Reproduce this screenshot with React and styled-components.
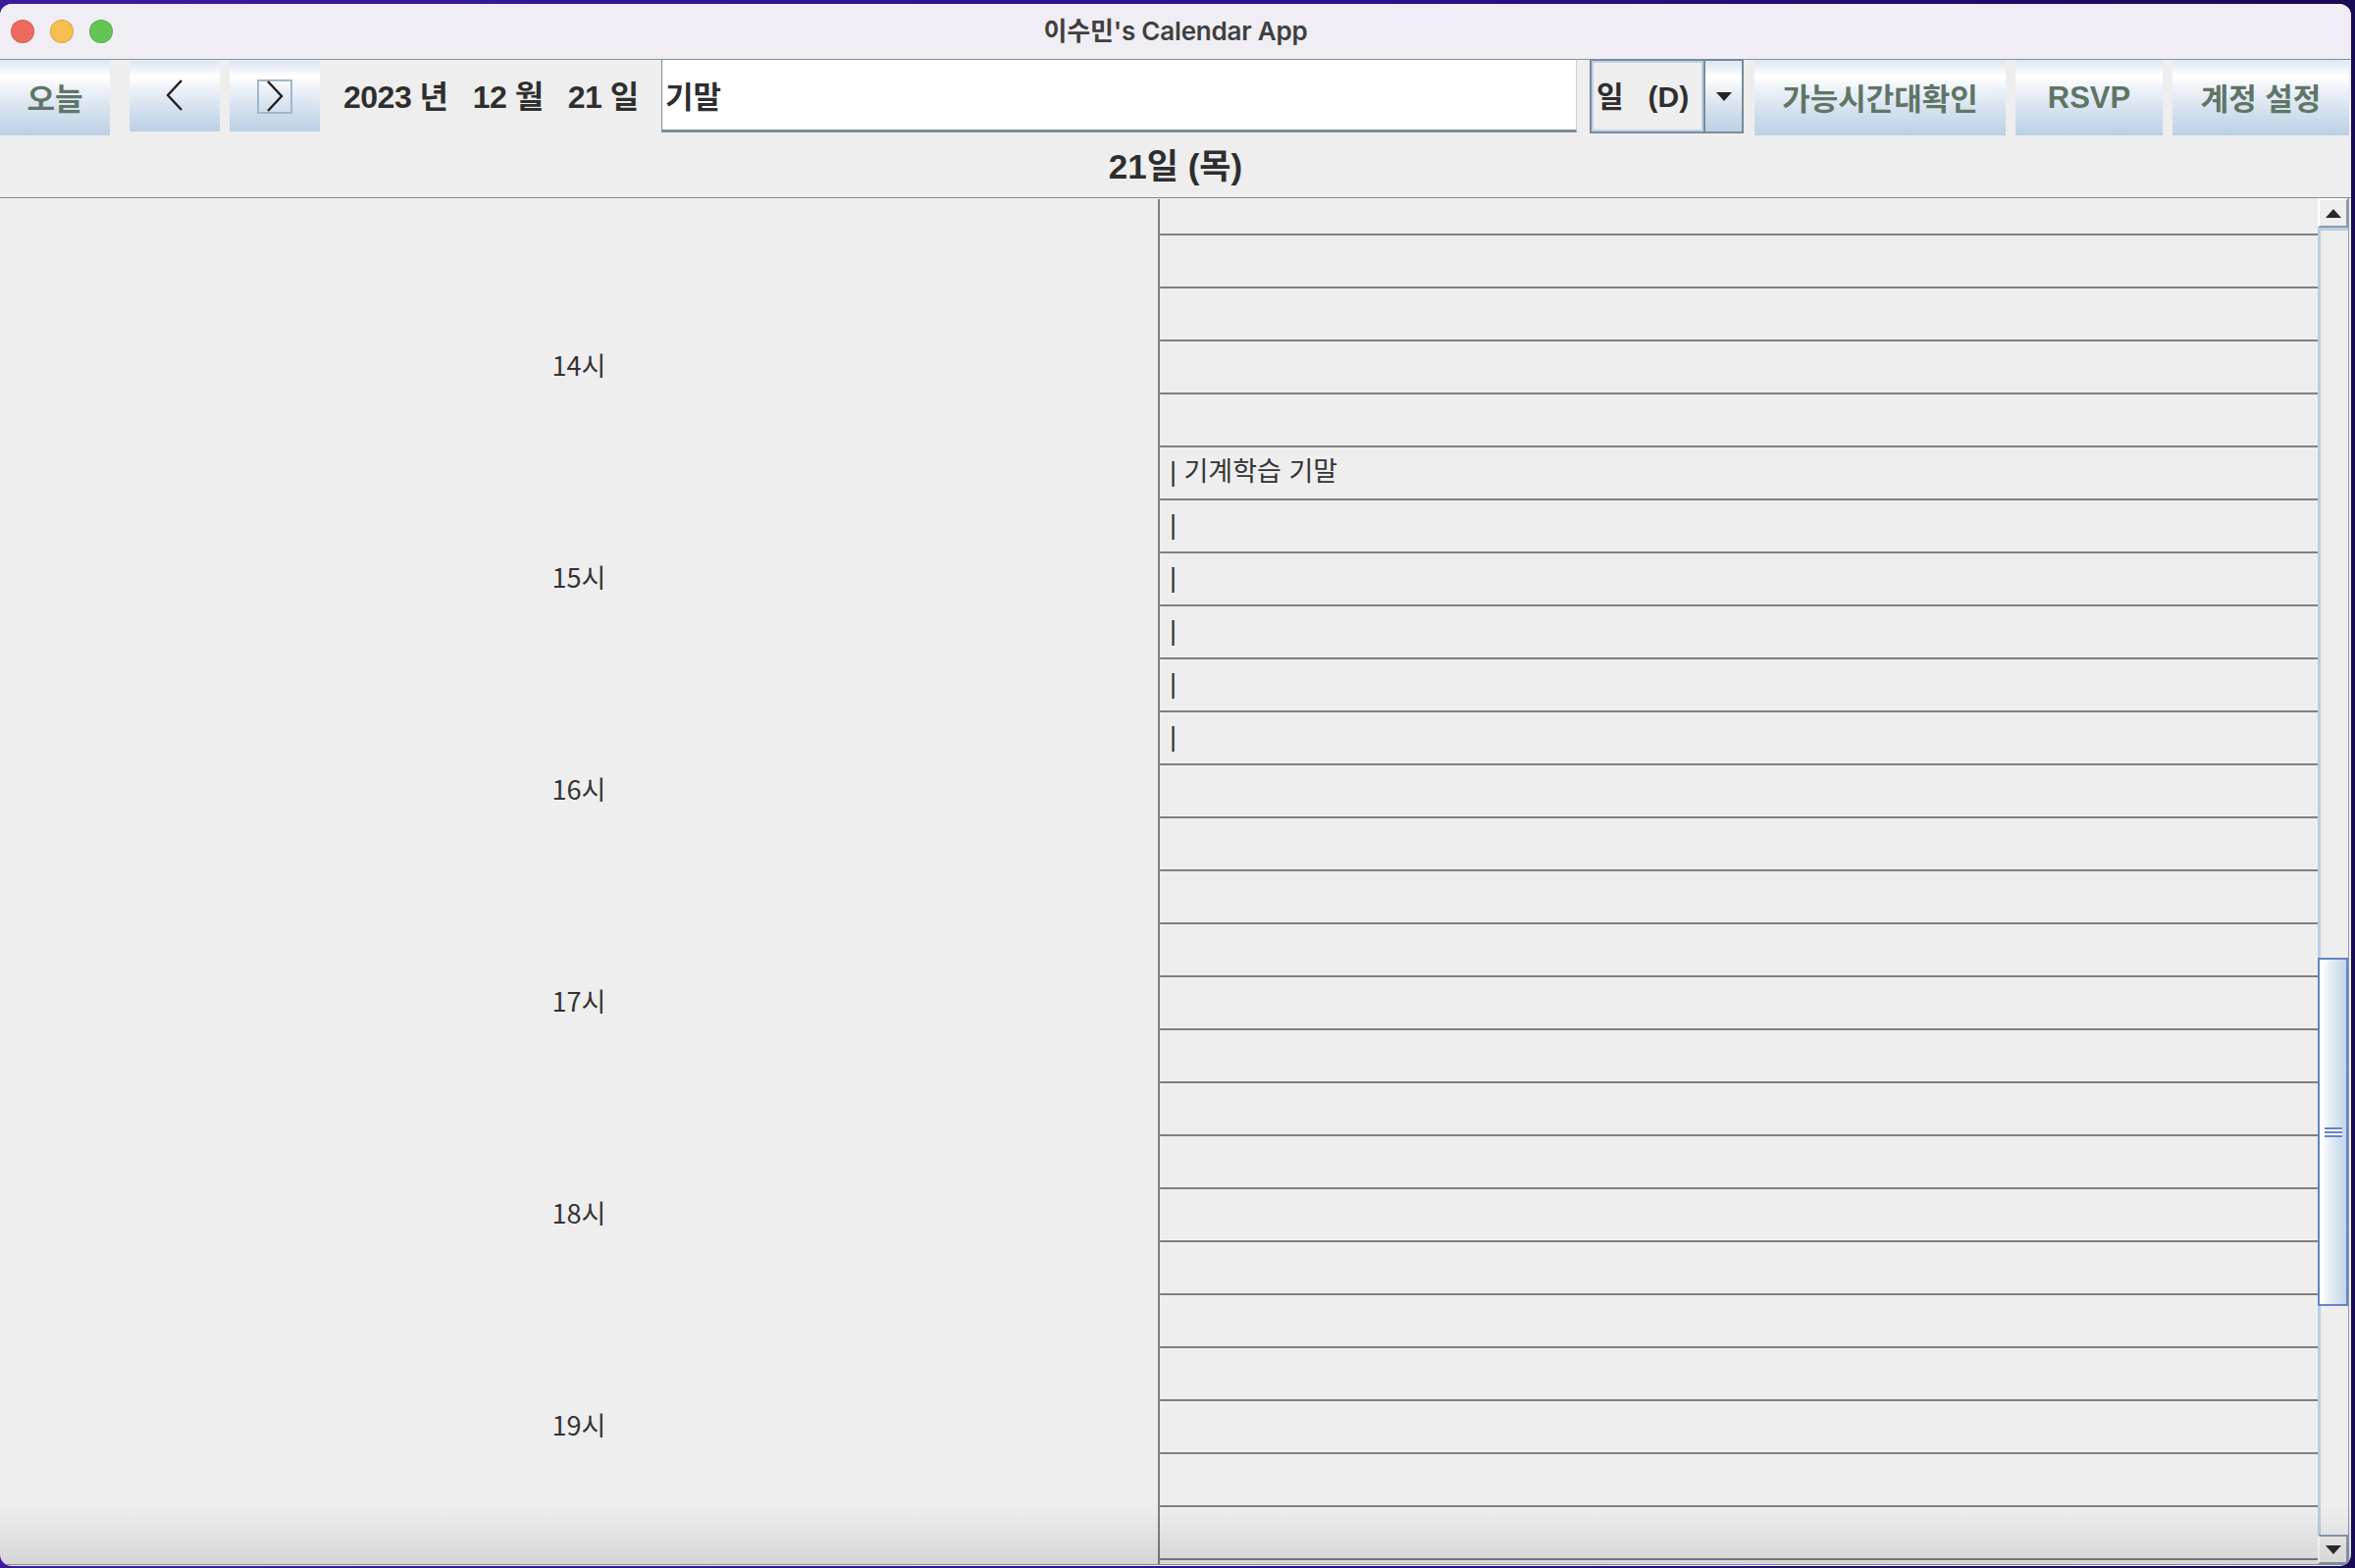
import React from "react";
import styled, { createGlobalStyle } from "styled-components";

const GlobalStyle = createGlobalStyle`
  html, body {
    margin: 0;
    padding: 0;
    background: #1e0b66;
  }
  body {
    font-family: "Liberation Sans", "Noto Sans CJK KR", sans-serif;
  }
`;

const HOURS = ["14시", "15시", "16시", "17시", "18시", "19시"];
const EVENT = { start: 5, length: 6, title: "기계학습 기말" };
const ROW_COUNT = 28;

function App() {
  const rows = Array.from({ length: ROW_COUNT }, (_, i) => {
    if (i === EVENT.start) return `| ${EVENT.title}`;
    if (i > EVENT.start && i < EVENT.start + EVENT.length) return "|";
    return "";
  });

  return (
    <Desktop>
      <GlobalStyle />
      <Window>
        <TitleBar>
          <Lights>
            <Light color="#ee6a5f" />
            <Light color="#f5bf4f" />
            <Light color="#62c655" />
          </Lights>
          <WindowTitle>이수민's Calendar App</WindowTitle>
          <span />
        </TitleBar>

        <Toolbar>
          <ToolButton width={112} height={77}>오늘</ToolButton>
          <ToolButton width={92} height={72} gap={20} aria-label="이전">
            <svg width="20" height="32" viewBox="0 0 20 32">
              <polyline points="17,1 3,16 17,31" fill="none" stroke="#1e1e1e" strokeWidth="2.4" />
            </svg>
          </ToolButton>
          <ToolButton width={92} height={72} gap={10} aria-label="다음">
            <FocusRing>
              <svg width="20" height="32" viewBox="0 0 20 32">
                <polyline points="3,1 17,16 3,31" fill="none" stroke="#1e1e1e" strokeWidth="2.4" />
              </svg>
            </FocusRing>
          </ToolButton>
          <DateLabel>2023 년&nbsp;&nbsp; 12 월&nbsp;&nbsp; 21 일</DateLabel>
          <SearchField defaultValue="기말" />
          <Combo>
            <ComboValue>일&nbsp;&nbsp; (D)</ComboValue>
            <ComboArrow>
              <svg width="16" height="9" viewBox="0 0 16 9">
                <polygon points="0,0 16,0 8,9" fill="#222" />
              </svg>
            </ComboArrow>
          </Combo>
          <ToolButton width={256} height={77} gap={11}>가능시간대확인</ToolButton>
          <ToolButton width={150} height={77} gap={10} latin>RSVP</ToolButton>
          <ToolButton width={180} height={77} gap={10}>계정 설정</ToolButton>
        </Toolbar>

        <DayHeader>21일 (목)</DayHeader>

        <Body>
          <TimeColumn>
            <HourList offset={61}>
              {HOURS.map((h) => (
                <HourCell key={h}>{h}</HourCell>
              ))}
            </HourList>
          </TimeColumn>

          <SlotColumn>
            <SlotList offset={-17}>
              {rows.map((text, i) => (
                <Slot key={i}>{text}</Slot>
              ))}
            </SlotList>
          </SlotColumn>

          <ScrollBar>
            <ArrowButton>
              <svg width="16" height="9" viewBox="0 0 16 9">
                <polygon points="8,0 16,9 0,9" fill="#2a2a2a" />
              </svg>
            </ArrowButton>
            <Track>
              <Thumb style={{ marginTop: 741, height: 355 }}>
                <Grip />
              </Thumb>
            </Track>
            <ArrowButton down>
              <svg width="16" height="9" viewBox="0 0 16 9">
                <polygon points="0,0 16,0 8,9" fill="#2a2a2a" />
              </svg>
            </ArrowButton>
          </ScrollBar>

          <BottomShade />
        </Body>
      </Window>
    </Desktop>
  );
}

export default App;

const Desktop = styled.div`
  width: 2400px;
  height: 1598px;
  box-sizing: border-box;
  padding: 4px 4px 2px 0;
  background: linear-gradient(90deg, #3b1b9c, #2a1190 55%, #1a0a55);
  overflow: hidden;
`;

const Window = styled.div`
  height: 100%;
  display: flex;
  flex-direction: column;
  border-radius: 12px;
  overflow: hidden;
  background: #eeeeee;
`;

const TitleBar = styled.div`
  height: 57px;
  flex: none;
  box-sizing: border-box;
  padding-bottom: 2px;
  display: grid;
  grid-template-columns: 1fr auto 1fr;
  align-items: center;
  background: #f0eef4;
  border-bottom: 1px solid #8391a1;
`;

const Lights = styled.div`
  display: flex;
  gap: 16px;
  padding-left: 11px;
  padding-top: 2px;
`;

const Light = styled.span`
  width: 24px;
  height: 24px;
  border-radius: 50%;
  background: ${(p) => p.color};
  box-shadow: inset 0 0 0 1px rgba(0, 0, 0, 0.12);
`;

const WindowTitle = styled.div`
  font-family: "Inter", "Noto Sans CJK KR", sans-serif;
  font-size: 26px;
  font-weight: 600;
  color: #3f3f3f;
  letter-spacing: -0.2px;
  margin-bottom: 4px;
`;

const Toolbar = styled.div`
  height: 77px;
  flex: none;
  display: flex;
  align-items: flex-start;
  background: #eeeeee;
`;

const ToolButton = styled.button`
  flex: none;
  width: ${(p) => p.width}px;
  height: ${(p) => p.height}px;
  margin: ${(p) => (p.height < 77 ? "1px" : "0")} 0 0 ${(p) => p.gap || 0}px;
  padding: 0 0 ${(p) => (p.latin ? 0 : 3)}px;
  border: none;
  display: flex;
  align-items: center;
  justify-content: center;
  background: linear-gradient(
    to bottom,
    #dbe6f2 0%,
    #ffffff 22%,
    #eef3f9 38%,
    #d6e2ef 65%,
    #bcd0e6 100%
  );
  font-family: "Liberation Sans", "Noto Sans CJK KR", sans-serif;
  font-size: 31px;
  font-weight: 700;
  color: #5f7566;
`;

const FocusRing = styled.span`
  display: flex;
  align-items: center;
  justify-content: center;
  width: 32px;
  height: 31px;
  margin-top: 3px;
  border: 2px solid #a2b6cb;
`;

const DateLabel = styled.div`
  flex: none;
  width: 348px;
  box-sizing: border-box;
  padding: 0 0 4px 24px;
  height: 74px;
  display: flex;
  align-items: center;
  white-space: nowrap;
  font-size: 32px;
  font-weight: 700;
  color: #2e2e2e;
  letter-spacing: -0.5px;
`;

const SearchField = styled.input`
  flex: none;
  width: 933px;
  height: 75px;
  margin-top: -1px;
  box-sizing: border-box;
  padding: 0 0 0 3px;
  border: none;
  border-left: 1px solid #7e8c9c;
  border-top: 1px solid #7e8c9c;
  border-bottom: 3px solid #7e8c9c;
  border-right: 1px solid #c8d0da;
  background: #ffffff;
  outline: none;
  font-family: "Noto Sans CJK KR", sans-serif;
  font-size: 31px;
  font-weight: 700;
  color: #2e2e2e;
`;

const Combo = styled.div`
  flex: none;
  width: 157px;
  height: 76px;
  margin: -1px 0 0 13px;
  box-sizing: border-box;
  display: flex;
  border: 2px solid #7b8a9a;
`;

const ComboValue = styled.div`
  flex: 1;
  display: flex;
  align-items: center;
  padding: 0 0 4px 3px;
  background: #eeeeee;
  border: 2px solid #bcd0e6;
  white-space: nowrap;
  font-size: 30px;
  font-weight: 700;
  color: #2e2e2e;
`;

const ComboArrow = styled.div`
  width: 37px;
  flex: none;
  display: flex;
  align-items: center;
  justify-content: center;
  border-left: 2px solid #7b8a9a;
  background: linear-gradient(to bottom, #dbe6f2 0%, #ffffff 22%, #d6e2ef 65%, #bcd0e6 100%);
`;

const DayHeader = styled.div`
  height: 64px;
  flex: none;
  box-sizing: border-box;
  padding-bottom: 6px;
  display: flex;
  align-items: center;
  justify-content: center;
  border-bottom: 1px solid #7d8b9b;
  font-family: "Liberation Sans", "Noto Sans CJK KR", sans-serif;
  font-size: 35px;
  font-weight: 700;
  color: #2e2e2e;
`;

const Body = styled.div`
  flex: 1;
  min-height: 0;
  position: relative;
  display: flex;
  padding-right: 2px;
  border-bottom: 1px solid #7d8b9b;
  margin-bottom: 1px;
`;

const TimeColumn = styled.div`
  width: 1180px;
  flex: none;
  overflow: hidden;
`;

const HourList = styled.div`
  padding-top: ${(p) => p.offset}px;
`;

const HourCell = styled.div`
  height: 216px;
  display: flex;
  align-items: center;
  justify-content: center;
  font-family: "Noto Sans CJK KR", sans-serif;
  font-size: 27px;
  color: #333333;
`;

const SlotColumn = styled.div`
  flex: 1;
  overflow: hidden;
  border-left: 2px solid #808080;
  margin-top: 1px;
`;

const SlotList = styled.div`
  margin-top: ${(p) => p.offset}px;
`;

const Slot = styled.div`
  height: 52px;
  border-bottom: 2px solid #808080;
  padding-left: 10px;
  line-height: 50px;
  white-space: pre;
  font-family: "Liberation Sans", "Noto Sans CJK KR", sans-serif;
  font-size: 27px;
  color: #333333;
`;

const ScrollBar = styled.div`
  width: 32px;
  flex: none;
  display: flex;
  flex-direction: column;
  background: #eeeeee;
  border-right: 1px solid #8a9aad;
  box-sizing: border-box;
`;

const ArrowButton = styled.div`
  height: 30px;
  flex: none;
  display: flex;
  align-items: center;
  justify-content: center;
  box-sizing: border-box;
  border-top: 2px solid #ffffff;
  border-left: 2px solid #ffffff;
  border-right: 2px solid #8a9aad;
  border-bottom: 2px solid #8a9aad;
  background: #eeeeee;
  ${(p) => p.down && "border-top-color: #8a9aad;"}
`;

const Track = styled.div`
  flex: 1;
  border-top: 3px solid #b8cfe5;
  border-left: 3px solid #b8cfe5;
  box-sizing: border-box;
  background: #eeeeee;
`;

const Thumb = styled.div`
  margin-left: -3px;
  box-sizing: border-box;
  border: 2px solid #6584c0;
  background: linear-gradient(to right, #ffffff 8%, #f0f5fa 25%, #d9e5f1 60%, #c2d5e9 100%);
  display: flex;
  align-items: center;
  justify-content: center;
`;

const Grip = styled.span`
  width: 18px;
  height: 10px;
  background: repeating-linear-gradient(
    to bottom,
    #6584c0 0,
    #6584c0 2px,
    #ffffff 2px,
    #ffffff 4px
  );
`;

const BottomShade = styled.div`
  position: absolute;
  left: 0;
  right: 0;
  bottom: 0;
  height: 60px;
  pointer-events: none;
  background: linear-gradient(to bottom, rgba(0, 0, 0, 0), rgba(0, 0, 0, 0.1));
`;
